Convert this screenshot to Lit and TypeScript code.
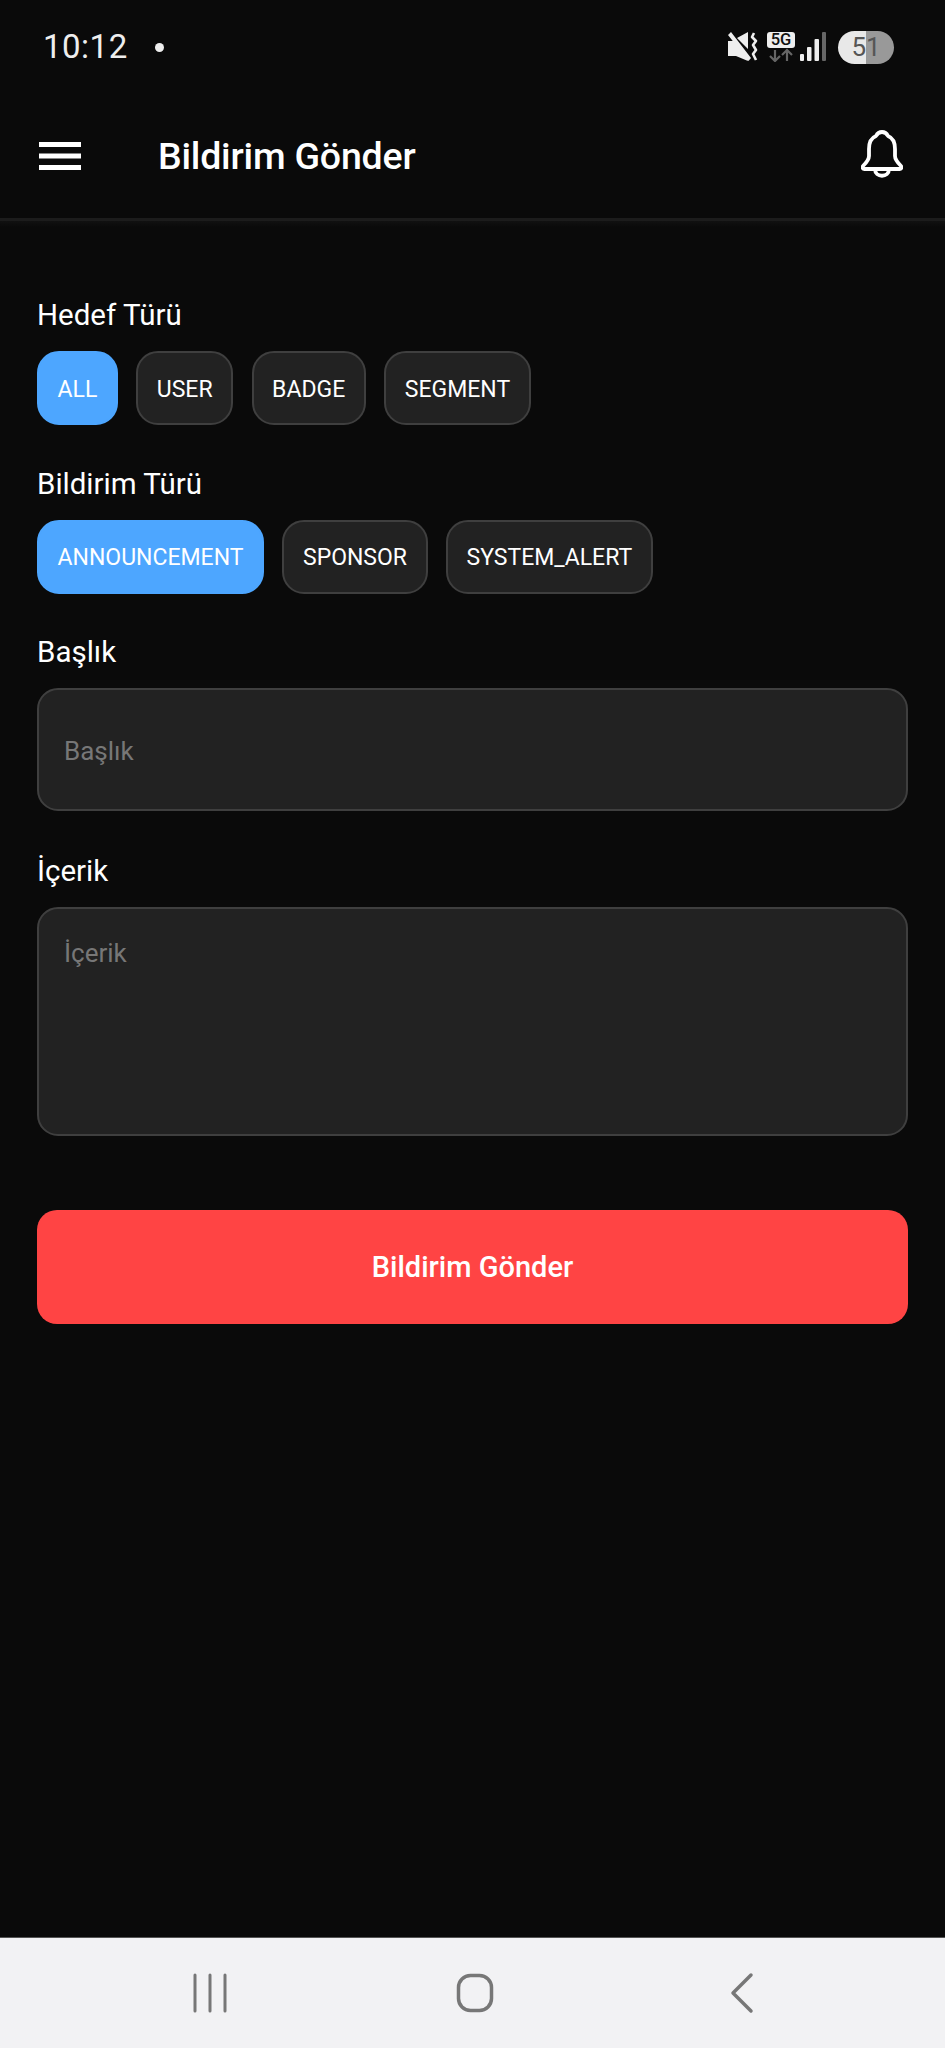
import { LitElement, html, css } from 'lit';
import { customElement, state } from 'lit/decorators.js';

const TARGETS = ['ALL', 'USER', 'BADGE', 'SEGMENT'];
const KINDS = ['ANNOUNCEMENT', 'SPONSOR', 'SYSTEM_ALERT'];

@customElement('app-root')
export class AppRoot extends LitElement {
  static styles = css`
    :host {
      display: flex;
      flex-direction: column;
      height: 2048px;
      background: #0a0a0a;
      color: #fff;
      font-family: Roboto, sans-serif;
    }
    .status {
      height: 80px;
      display: flex;
      align-items: center;
      padding: 0 51px 0 43px;
      color: #eee;
      flex: none;
      box-sizing: border-box;
    }
    .time {
      font-size: 33px;
      letter-spacing: 0.5px;
      line-height: 60px;
      height: 60px;
      margin-top: 14px;
    }
    .dot {
      width: 9px;
      height: 9px;
      border-radius: 50%;
      background: #eee;
      margin-left: 27px;
      margin-top: 14px;
    }
    .status-icons {
      margin-left: auto;
      display: flex;
      align-items: center;
      margin-top: 14px;
    }
    .five-g {
      width: 28px;
      height: 30px;
      margin-left: 9px;
      display: flex;
      flex-direction: column;
      align-items: center;
    }
    .five-g b {
      display: block;
      width: 28px;
      height: 16px;
      border-radius: 3px;
      background: #eee;
      color: #111;
      font-size: 16.5px;
      line-height: 16px;
      font-weight: 500;
      text-align: center;
    }
    .signal {
      margin-left: 5px;
    }
    .battery {
      position: relative;
      width: 56px;
      height: 33px;
      margin-left: 12px;
      border-radius: 17px;
      overflow: hidden;
      background: linear-gradient(90deg, #e8e8e8 50%, #999 50%);
      color: #555;
      font-size: 26px;
      line-height: 33px;
      text-align: center;
    }
    header {
      height: 141px;
      flex: none;
      box-sizing: border-box;
      display: flex;
      align-items: center;
      padding: 13px 42px 0 39px;
      border-bottom: 3px solid #1c1c1c;
    }
    header h1 {
      margin: 0 0 0 77px;
      font-size: 37.5px;
      font-weight: 500;
      letter-spacing: -0.2px;
    }
    .bell {
      margin-left: auto;
      margin-bottom: 3px;
    }
    main {
      flex: 1;
      padding: 0 37px;
      background: linear-gradient(#111 0, #0a0a0a 6px);
    }
    label {
      display: block;
      font-size: 29.5px;
      line-height: 36px;
      margin-bottom: 18px;
    }
    .chips {
      display: flex;
      gap: 18.5px;
      margin-bottom: 40.5px;
    }
    .first {
      padding-top: 76px;
    }
    .chip {
      box-sizing: border-box;
      height: 74px;
      padding: 2px 18.5px 0;
      display: flex;
      align-items: center;
      background: #222;
      border: 2.5px solid #3f3f3f;
      border-radius: 22px;
      font-size: 23px;
    }
    .chip.on {
      background: #4da6ff;
      border-color: #4da6ff;
    }
    .field {
      box-sizing: border-box;
      background: #222;
      border: 2.5px solid #3f3f3f;
      border-radius: 21px;
      padding: 0 25px;
      color: #777;
      font-size: 26px;
    }
    .input {
      height: 123px;
      display: flex;
      align-items: center;
      margin-bottom: 42px;
      padding-top: 3px;
    }
    .area {
      height: 229px;
      padding-top: 29px;
      margin-bottom: 73.5px;
    }
    .send {
      height: 114px;
      background: #ff4444;
      border-radius: 20px;
      display: flex;
      align-items: center;
      justify-content: center;
      font-size: 29px;
      font-weight: 500;
      padding-top: 1px;
      box-sizing: border-box;
    }
    nav {
      height: 111px;
      flex: none;
      box-sizing: border-box;
      background: #f2f2f4;
      border-top: 1px solid #555;
      position: relative;
    }
    nav svg {
      display: block;
    }
  `;

  @state() target = 'ALL';
  @state() kind = 'ANNOUNCEMENT';

  render() {
    return html`
      <div class="status">
        <span class="time">10:12</span>
        <span class="dot"></span>
        <div class="status-icons">
          <svg width="30" height="30" viewBox="0 0 30 30" fill="#eee">
            <path d="M3 0 L23 26 L20.5 29 L0 3Z M0 9 L7 9 L18 23 L20 29 L8 24 L0 24Z M9 6 L20 0 L20 17Z" />
            <path d="M26 1 L24 5 L28 9 L25 13 L28 18 L25 22 L28 28" fill="none" stroke="#eee" stroke-width="2.6" stroke-linejoin="round" />
          </svg>
          <div class="five-g">
            <b>5G</b>
            <svg width="28" height="14" viewBox="0 0 28 14" fill="none" stroke="#666" stroke-width="2.2">
              <path d="M8 2 V13 M3 8 L8 13 L13 8 M20 13 V2 M15 7 L20 2 L25 7" />
            </svg>
          </div>
          <svg class="signal" width="26" height="30" viewBox="0 0 26 30">
            <rect x="0" y="22" width="4" height="7" rx="1" fill="#eee" />
            <rect x="7" y="15" width="4.5" height="14" rx="1" fill="#eee" />
            <rect x="14.5" y="7" width="4.5" height="22" rx="1" fill="#eee" />
            <rect x="22" y="0" width="4" height="29" rx="1" fill="#666" />
          </svg>
          <div class="battery">51</div>
        </div>
      </div>
      <header>
        <svg width="42" height="28" viewBox="0 0 42 28" fill="#fff">
          <rect y="0" width="42" height="5" />
          <rect y="11.5" width="42" height="5" />
          <rect y="23" width="42" height="5" />
        </svg>
        <h1>Bildirim Gönder</h1>
        <svg class="bell" width="42" height="48" viewBox="0 0 42 48" fill="none" stroke="#fff" stroke-width="3.8" stroke-linejoin="round">
          <path d="M21 2 C24 2 26 4 27 6 C32 8 34 13 34 19 L34 26 C34 30 37 33 40 36 C41 38 40 39 38.5 39 L3.5 39 C2 39 1 38 2 36 C5 33 8 30 8 26 L8 19 C8 13 10 8 15 6 C16 4 18 2 21 2Z" />
          <path d="M14 39 C14 48 28 48 28 39" />
        </svg>
      </header>
      <main>
        <div class="first">
          <label>Hedef Türü</label>
          <div class="chips">
            ${TARGETS.map(
              (t) => html`<div class="chip ${t === this.target ? 'on' : ''}">${t}</div>`
            )}
          </div>
        </div>
        <label>Bildirim Türü</label>
        <div class="chips">
          ${KINDS.map((k) => html`<div class="chip ${k === this.kind ? 'on' : ''}">${k}</div>`)}
        </div>
        <label>Başlık</label>
        <div class="field input">Başlık</div>
        <label>İçerik</label>
        <div class="field area">İçerik</div>
        <div class="send">Bildirim Gönder</div>
      </main>
      <nav>
        <svg width="945" height="110" viewBox="0 0 945 110" fill="none" stroke="#777">
          <path d="M195 37 V73 M210 37 V73 M225 37 V73" stroke-width="3" stroke-linecap="round" />
          <rect x="458.5" y="37.5" width="33" height="35" rx="12" stroke-width="3.5" />
          <path d="M751 37 L733 55 L751 73" stroke-width="3.5" stroke-linecap="round" stroke-linejoin="round" />
        </svg>
      </nav>
    `;
  }
}
